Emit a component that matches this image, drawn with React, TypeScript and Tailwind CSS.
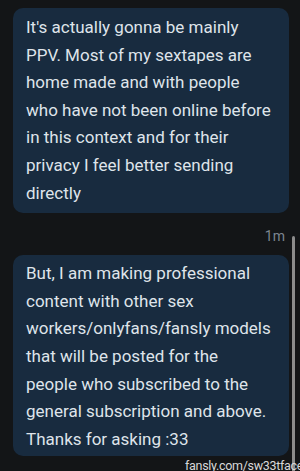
const msg1 = [
  "It's actually gonna be mainly",
  "PPV. Most of my sextapes are",
  "home made and with people",
  "who have not been online before",
  "in this context and for their",
  "privacy I feel better sending",
  "directly",
];
const msg2 = [
  "But, I am making professional",
  "content with other sex",
  "workers/onlyfans/fansly models",
  "that will be posted for the",
  "people who subscribed to the",
  "general subscription and above.",
  "Thanks for asking :33",
];

function Bubble({ lines, pad }: { lines: string[]; pad: string }) {
  return (
    <div className={`bg-[#182b3f] rounded-[10px] pl-[13px] pr-[6px] text-[17px] leading-[27.6px] text-[#dfe4ea] ${pad}`}>
      {lines.map((l, i) => (
        <div key={i} className="whitespace-nowrap">{l}</div>
      ))}
    </div>
  );
}

export default function App() {
  return (
    <div className="w-[300px] h-[471px] bg-[#131517] overflow-hidden relative" style={{ fontFamily: "Roboto, 'Noto Sans', sans-serif" }}>
      <div className="pt-[8px] pl-[13px] pr-[11px] flex flex-col">
        <Bubble lines={msg1} pad="pt-[6px] pb-[6px]" />
        <div className="flex justify-end pr-[4px] pt-[13px] pb-[9px]">
          <span className="text-[14px] leading-[20px] text-[#7d8590]">1m</span>
        </div>
        <Bubble lines={msg2} pad="pt-[5px] pb-[3px]" />
      </div>
      <div className="absolute left-[292px] top-[236px] w-[3px] h-[240px] bg-[#8c8c8c] rounded-[2px]" />
      <div className="absolute left-[185px] top-[457px] text-[12.5px] tracking-[-0.3px] leading-[17px] text-[#d8d8d8] whitespace-nowrap">fansly.com/sw33tface</div>
    </div>
  );
}
